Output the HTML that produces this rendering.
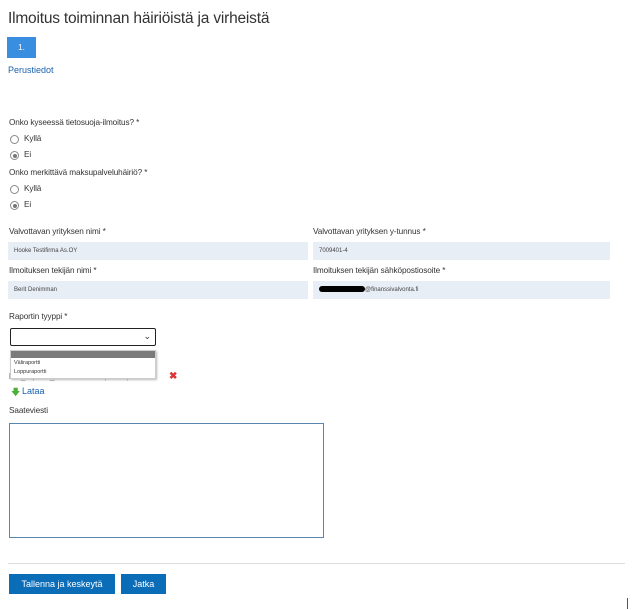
<!DOCTYPE html>
<html><head><meta charset="utf-8"><style>
body{margin:0;width:642px;height:610px;background:#fff;font-family:"Liberation Sans",sans-serif;color:#333;position:relative;overflow:hidden}
.a{position:absolute;white-space:nowrap}
.lbl{font-size:8.2px;color:#333;letter-spacing:-0.1px}
.inp{position:absolute;background:#e8eef6;height:18px;font-size:6px;line-height:18px;padding-left:6px;box-sizing:border-box;color:#444}
.rad{position:absolute;width:9px;height:9px;border:1px solid #888;border-radius:50%;box-sizing:border-box;background:#fff}
.rad.on::after{content:"";position:absolute;left:1.5px;top:1.5px;width:4px;height:4px;border-radius:50%;background:#777}
.btn{position:absolute;background:#0b6cb8;color:#fff;font-size:9px;text-align:center;line-height:20px;height:20px}
</style></head><body>
<div class="a" style="left:8px;top:10px;font-size:15.5px;color:#333;letter-spacing:-0.2px">Ilmoitus toiminnan häiriöistä ja virheistä</div>
<div class="a" style="left:7px;top:37px;width:29px;height:21px;background:#3a8ee0;color:#fff;font-size:8px;text-align:center;line-height:21px">1.</div>
<div class="a" style="left:8px;top:65px;font-size:9px;color:#1a62ad">Perustiedot</div>

<div class="a lbl" style="left:9px;top:118px">Onko kyseessä tietosuoja-ilmoitus? *</div>
<div class="rad" style="left:10px;top:135px"></div><div class="a lbl" style="left:24px;top:134px">Kyllä</div>
<div class="rad on" style="left:10px;top:151px"></div><div class="a lbl" style="left:24px;top:150px">Ei</div>
<div class="a lbl" style="left:9px;top:168px">Onko merkittävä maksupalveluhäiriö? *</div>
<div class="rad" style="left:10px;top:185px"></div><div class="a lbl" style="left:24px;top:184px">Kyllä</div>
<div class="rad on" style="left:10px;top:201px"></div><div class="a lbl" style="left:24px;top:200px">Ei</div>

<div class="a lbl" style="left:9px;top:227px">Valvottavan yrityksen nimi *</div>
<div class="a lbl" style="left:313px;top:227px">Valvottavan yrityksen y-tunnus *</div>
<div class="inp" style="left:8px;top:242px;width:300px">Hooke Testifirma As.OY</div>
<div class="inp" style="left:313px;top:242px;width:297px">7009401-4</div>
<div class="a lbl" style="left:9px;top:266px">Ilmoituksen tekijän nimi *</div>
<div class="a lbl" style="left:313px;top:266px">Ilmoituksen tekijän sähköpostiosoite *</div>
<div class="inp" style="left:8px;top:281px;width:300px">Berit Denimman</div>
<div class="inp" style="left:313px;top:281px;width:297px"><span style="display:inline-block;width:46px;height:6px;background:#000;border-radius:3px;vertical-align:middle"></span>@finanssivalvonta.fi</div>

<div class="a lbl" style="left:9px;top:312px">Raportin tyyppi *</div>
<div class="a" style="left:10px;top:328px;width:146px;height:18px;border:1.5px solid #222;border-radius:2px;box-sizing:border-box"><span style="position:absolute;right:4px;top:2px;font-size:9px">&#8964;</span></div>
<div class="a lbl" style="left:9px;top:372px;color:#555">liite_raportti_tiedosto.docx (12 kB)</div>
<div class="a" style="left:169px;top:371px;color:#d33;font-size:10px;font-weight:bold">✖</div>
<div class="a" style="left:10px;top:350px;width:146px;height:29px;background:#fff;border:1px solid #ccc;box-sizing:border-box;box-shadow:1px 1px 2px #bbb">
<div style="height:7px;background:#7a7a7a"></div>
<div style="font-size:5.5px;padding-left:3px;line-height:9px;margin-top:1px">Väliraportti</div>
<div style="font-size:5.5px;padding-left:3px;line-height:9px">Loppuraportti</div></div>
<div class="a" style="left:11px;top:385px;color:#4caf3a;font-size:9px">🡇</div>
<div class="a" style="left:22px;top:386px;font-size:9px;color:#1a62ad">Lataa</div>

<div class="a lbl" style="left:9px;top:406px">Saateviesti</div>
<div class="a" style="left:9px;top:423px;width:315px;height:115px;border:1px solid #5a86b0;box-sizing:border-box"></div>
<div class="a" style="left:8px;top:563px;width:617px;height:1px;background:#ddd"></div>
<div class="btn" style="left:9px;top:574px;width:106px">Tallenna ja keskeytä</div>
<div class="btn" style="left:121px;top:574px;width:45px">Jatka</div>
<div class="a" style="left:627px;top:598px;width:1px;height:11px;background:#555"></div>
</body></html>
